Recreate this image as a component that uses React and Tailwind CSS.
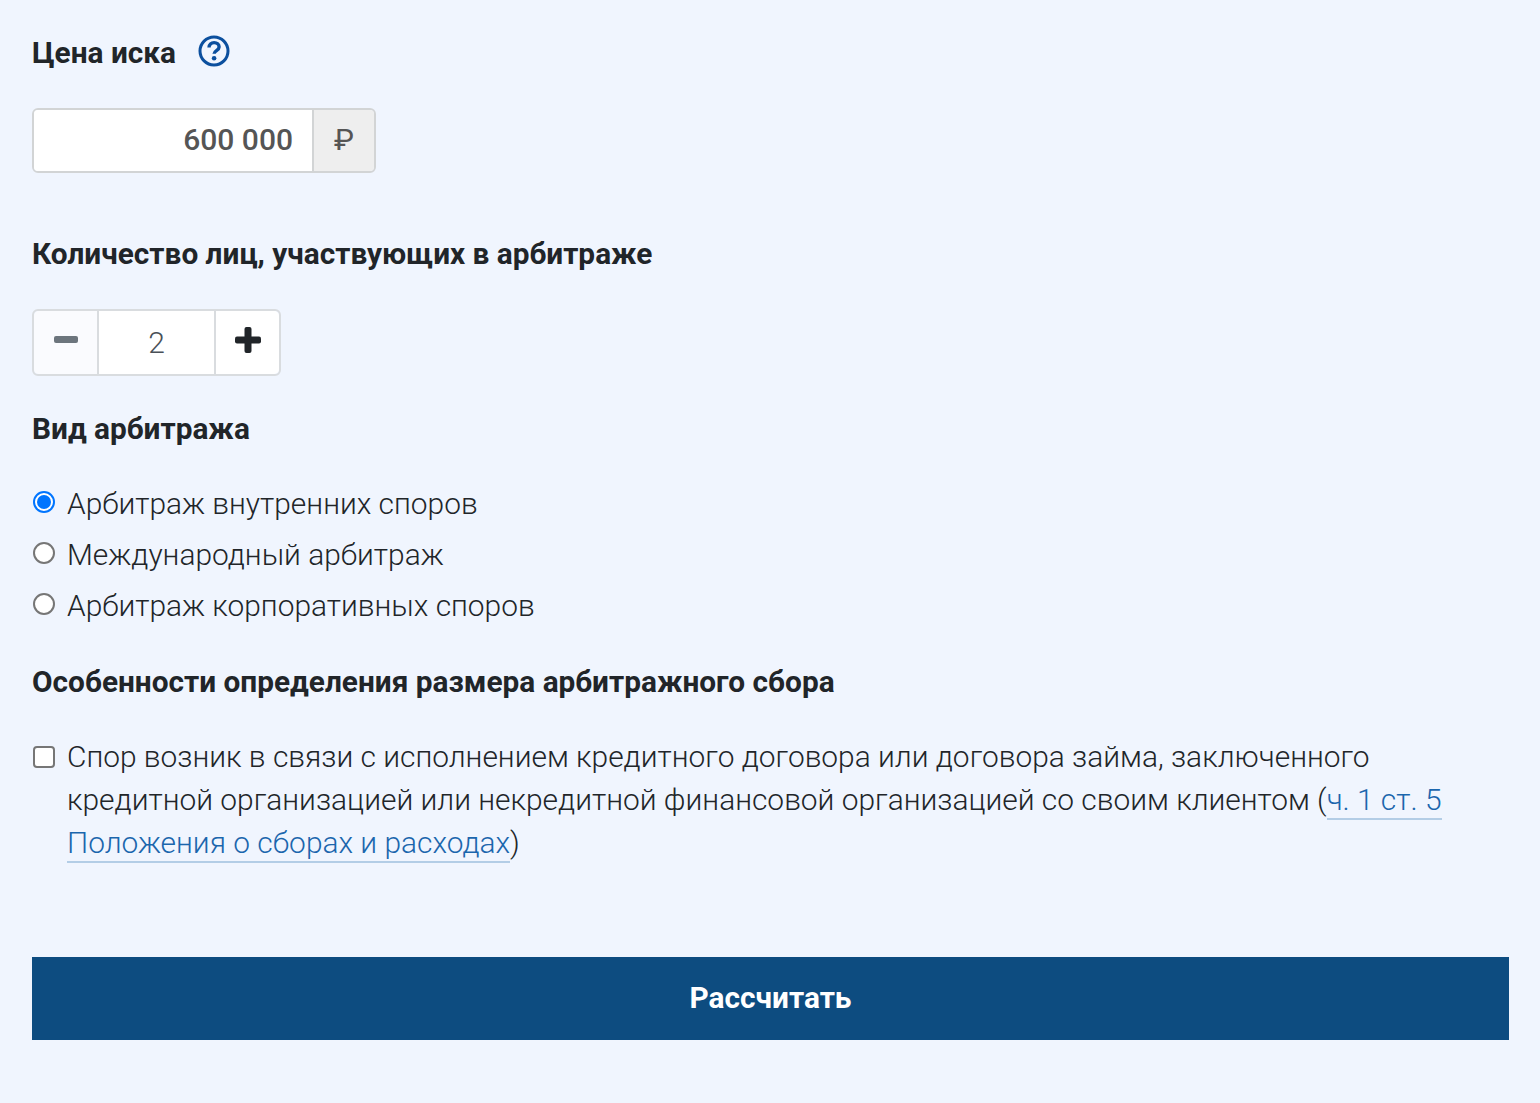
import React from "react";

const Heading = ({ children, className = "" }) => (
  <h3 className={`text-[29.8px] leading-[38px] font-bold text-[#212529] ${className}`}>{children}</h3>
);

const Radio = ({ checked, label }) => (
  <label className="flex h-[51px] items-center">
    {checked ? (
      <span className="mb-[4px] ml-[1px] flex h-[22px] w-[22px] shrink-0 items-center justify-center rounded-full border-[2px] border-[#0075ff] bg-white">
        <span className="h-[14px] w-[14px] rounded-full bg-[#0075ff]"></span>
      </span>
    ) : (
      <span className="mb-[4px] ml-[1px] h-[22px] w-[22px] shrink-0 rounded-full border-[2px] border-[#767676] bg-white"></span>
    )}
    <span className="ml-[12px] text-[29.9px] leading-[43px] font-light text-[#212529]">{label}</span>
  </label>
);

export default function App() {
  return (
    <div className="min-h-[1103px] w-full bg-[#f0f5fe] pt-[34px] pr-[31px] pl-[32px] font-['Roboto',sans-serif]">
      <div className="flex items-center">
        <Heading>Цена иска</Heading>
        <svg className="mb-[4px] ml-[22px]" width="32" height="32" viewBox="0 0 32 32" fill="none">
          <circle cx="16" cy="16" r="14" stroke="#0b4f9e" strokeWidth="3" />
          <path d="M11 12.500c0-3 2.200-4.900 5.100-4.900 2.900 0 5 1.800 5 4.300 0 3.600-5 3.700-5 6.900" stroke="#0b4f9e" strokeWidth="3.400" />
          <circle cx="16.100" cy="23.200" r="2.300" fill="#0b4f9e" />
        </svg>
      </div>

      <div className="mt-[36px] flex h-[65px] w-[344px] overflow-hidden rounded-[6px] border-[2px] border-[#d2d4d5]">
        <div className="flex flex-1 items-center justify-end bg-white pr-[19px] pb-[2px] text-[30px] font-medium text-[#555555]">
          600 000
        </div>
        <div className="flex w-[62px] items-center justify-center border-l-[2px] border-[#d2d4d5] bg-[#eeeeee] pb-[2px] text-[30px] text-[#555555]">
          ₽
        </div>
      </div>

      <Heading className="mt-[62px]">Количество лиц, участвующих в арбитраже</Heading>

      <div className="mt-[36px] flex h-[67px] w-[249px] rounded-[6px] border-[2px] border-[#d9dcdf]">
        <div className="flex w-[63px] items-center justify-center rounded-l-[5px] bg-[#fafbfe] pb-[7px]">
          <span className="h-[7px] w-[24px] rounded-[2px] bg-[#6c757d]"></span>
        </div>
        <div className="flex w-[119px] items-center justify-center border-x-[2px] border-[#d9dcdf] bg-white text-[30px] font-light text-[#495057]">
          2
        </div>
        <div className="flex flex-1 items-center justify-center rounded-r-[5px] bg-white pb-[5px]">
          <svg width="26" height="26" viewBox="0 0 26 26" fill="#212529">
            <rect x="0" y="9.500" width="26" height="7" rx="2" />
            <rect x="9.500" y="0" width="7" height="26" rx="2" />
          </svg>
        </div>
      </div>

      <Heading className="mt-[34px]">Вид арбитража</Heading>

      <div className="mt-[30px]">
        <Radio checked label="Арбитраж внутренних споров" />
        <Radio label="Международный арбитраж" />
        <Radio label="Арбитраж корпоративных споров" />
      </div>

      <Heading className="mt-[32px]">Особенности определения размера арбитражного сбора</Heading>

      <div className="mt-[34px] flex">
        <span className="mt-[11px] ml-[1px] h-[22px] w-[22px] shrink-0 rounded-[4px] border-[2px] border-[#767676] bg-white"></span>
        <p className="ml-[12px] text-[29.9px] leading-[43px] font-light text-[#212529]">
          Спор возник в связи с исполнением кредитного договора или договора займа, заключенного
          кредитной организацией или некредитной финансовой организацией со своим клиентом (
          <a className="border-b-[2px] border-[#b3cde6] pb-[1px] text-[#1b66ad]">ч. 1 ст. 5 Положения о сборах и расходах</a>)
        </p>
      </div>

      <button className="mt-[93px] flex h-[83px] w-full items-center justify-center bg-[#0d4c80] text-[29.8px] font-bold text-white">
        Рассчитать
      </button>
    </div>
  );
}
